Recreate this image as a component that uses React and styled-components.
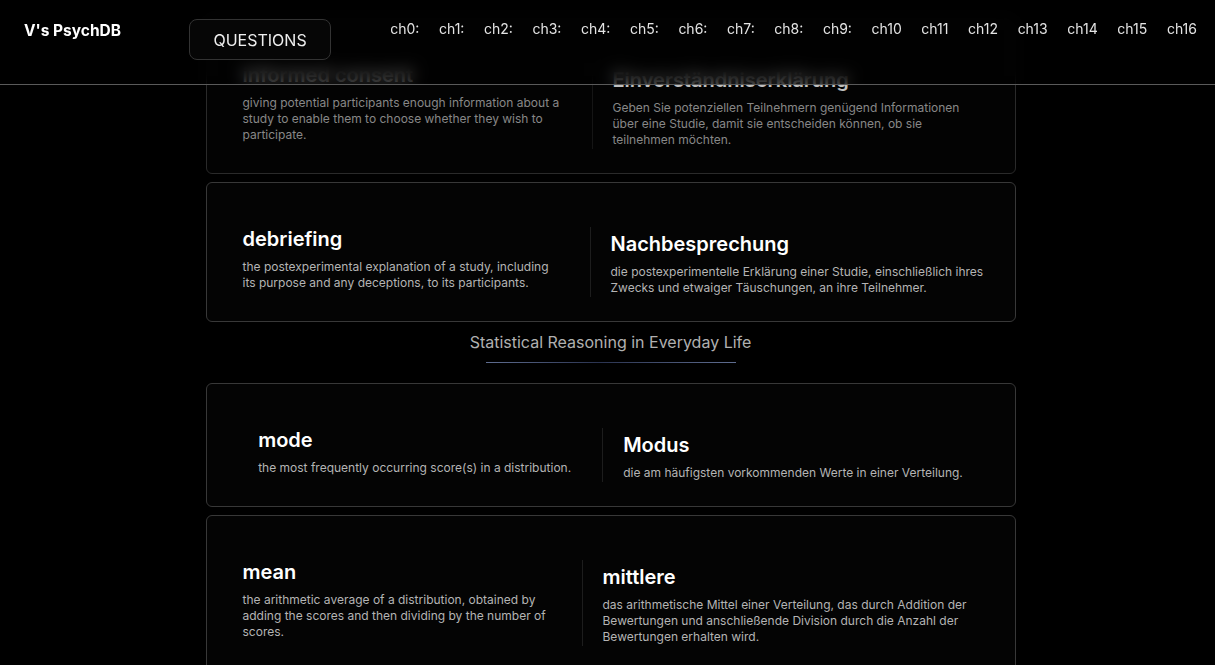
import React from "react";
import styled, { createGlobalStyle } from "styled-components";

const GlobalStyle = createGlobalStyle`
  html, body {
    margin: 0;
    padding: 0;
    background: #000;
    color: #fff;
    font-family: Inter, "Noto Sans", sans-serif;
    overflow: hidden;
  }
`;

const Header = styled.header`
  position: fixed;
  top: 0;
  left: 0;
  right: 0;
  height: 85px;
  box-sizing: border-box;
  display: flex;
  align-items: flex-start;
  padding: 19px 18px 0 24px;
  background: rgba(0, 0, 0, 0.5);
  -webkit-backdrop-filter: blur(8px);
  backdrop-filter: blur(8px);
  border-bottom: 1px solid #5a5a5a;
  z-index: 10;
`;

const Logo = styled.div`
  font-size: 15.5px;
  font-weight: 700;
  line-height: 24px;
  color: #fff;
  white-space: nowrap;
`;

const QuestionsButton = styled.button`
  margin-left: 68px;
  width: 142px;
  height: 41px;
  border: 1px solid #333;
  border-radius: 8px;
  background: rgba(8, 8, 8, 0.8);
  color: #eee;
  font-family: Inter, sans-serif;
  font-size: 16px;
  cursor: pointer;
`;

const ChapterNav = styled.nav`
  margin-left: auto;
  display: flex;
  gap: 19.6px;
`;

const ChapterLink = styled.a`
  font-size: 14px;
  line-height: 20px;
  color: #e4e4e4;
  text-decoration: none;
`;

const Page = styled.div`
  padding-left: 6px;
`;

const Main = styled.main`
  width: 810px;
  margin: 0 auto;
  padding-top: 18px;
`;

const Card = styled.section`
  box-sizing: border-box;
  display: flex;
  justify-content: ${(p) => (p.$centered ? "center" : "flex-start")};
  align-items: flex-start;
  padding: 44px 36px 24px;
  margin-bottom: 8px;
  background: #040404;
  border: 1px solid #383838;
  border-radius: 6px;
  opacity: ${(p) => (p.$faded ? 0.75 : 1)};
`;

const TermColumn = styled.div`
  flex: 0 0 auto;
  width: ${(p) => (p.$width ? `${p.$width}px` : "auto")};
  padding: 0 31px 6px 0;
  border-right: 1px solid #1d1d1d;
`;

const TranslationColumn = styled.div`
  flex: 0 0 auto;
  width: ${(p) => (p.$width ? `${p.$width}px` : "auto")};
  padding: 5px 0 0 20px;
`;

const Term = styled.h3`
  margin: 0 0 8px;
  font-size: 20px;
  font-weight: 600;
  line-height: 24px;
  color: #fff;
`;

const Definition = styled.p`
  margin: 0;
  font-size: 12px;
  line-height: 16px;
  color: #b4b4b4;
`;

const SectionHeading = styled.div`
  display: flex;
  flex-direction: column;
  align-items: center;
  padding-top: 2px;
  margin-bottom: 20px;
`;

const SectionTitle = styled.h2`
  margin: 0;
  font-size: 16px;
  font-weight: 400;
  line-height: 20px;
  color: #b0b0b0;
`;

const Underline = styled.div`
  margin-top: 10px;
  width: 250px;
  height: 1px;
  background: linear-gradient(90deg, #5f6d90, #2a3350 45%, #5f6d90);
`;

const chapters = [
  "ch0:", "ch1:", "ch2:", "ch3:", "ch4:", "ch5:", "ch6:", "ch7:", "ch8:",
  "ch9:", "ch10", "ch11", "ch12", "ch13", "ch14", "ch15", "ch16",
];

function TermCard({ term, definition, translation, translationDef, left, right, centered, faded }) {
  return (
    <Card $centered={centered} $faded={faded}>
      <TermColumn $width={left}>
        <Term>{term}</Term>
        <Definition>{definition}</Definition>
      </TermColumn>
      <TranslationColumn $width={right}>
        <Term>{translation}</Term>
        <Definition>{translationDef}</Definition>
      </TranslationColumn>
    </Card>
  );
}

export default function App() {
  return (
    <>
      <GlobalStyle />
      <Header>
        <Logo>V's PsychDB</Logo>
        <QuestionsButton>QUESTIONS</QuestionsButton>
        <ChapterNav>
          {chapters.map((c) => (
            <ChapterLink key={c} href="#">{c}</ChapterLink>
          ))}
        </ChapterNav>
      </Header>
      <Page>
        <Main>
          <TermCard
            faded
            left={318}
            right={368}
            term="informed consent"
            definition="giving potential participants enough information about a study to enable them to choose whether they wish to participate."
            translation="Einverständniserklärung"
            translationDef="Geben Sie potenziellen Teilnehmern genügend Informationen über eine Studie, damit sie entscheiden können, ob sie teilnehmen möchten."
          />
          <TermCard
            left={316}
            right={374}
            term="debriefing"
            definition="the postexperimental explanation of a study, including its purpose and any deceptions, to its participants."
            translation="Nachbesprechung"
            translationDef="die postexperimentelle Erklärung einer Studie, einschließlich ihres Zwecks und etwaiger Täuschungen, an ihre Teilnehmer."
          />
          <SectionHeading>
            <SectionTitle>Statistical Reasoning in Everyday Life</SectionTitle>
            <Underline />
          </SectionHeading>
          <TermCard
            centered
            term="mode"
            definition="the most frequently occurring score(s) in a distribution."
            translation="Modus"
            translationDef="die am häufigsten vorkommenden Werte in einer Verteilung."
          />
          <TermCard
            left={308}
            right={378}
            term="mean"
            definition="the arithmetic average of a distribution, obtained by adding the scores and then dividing by the number of scores."
            translation="mittlere"
            translationDef="das arithmetische Mittel einer Verteilung, das durch Addition der Bewertungen und anschließende Division durch die Anzahl der Bewertungen erhalten wird."
          />
        </Main>
      </Page>
    </>
  );
}
